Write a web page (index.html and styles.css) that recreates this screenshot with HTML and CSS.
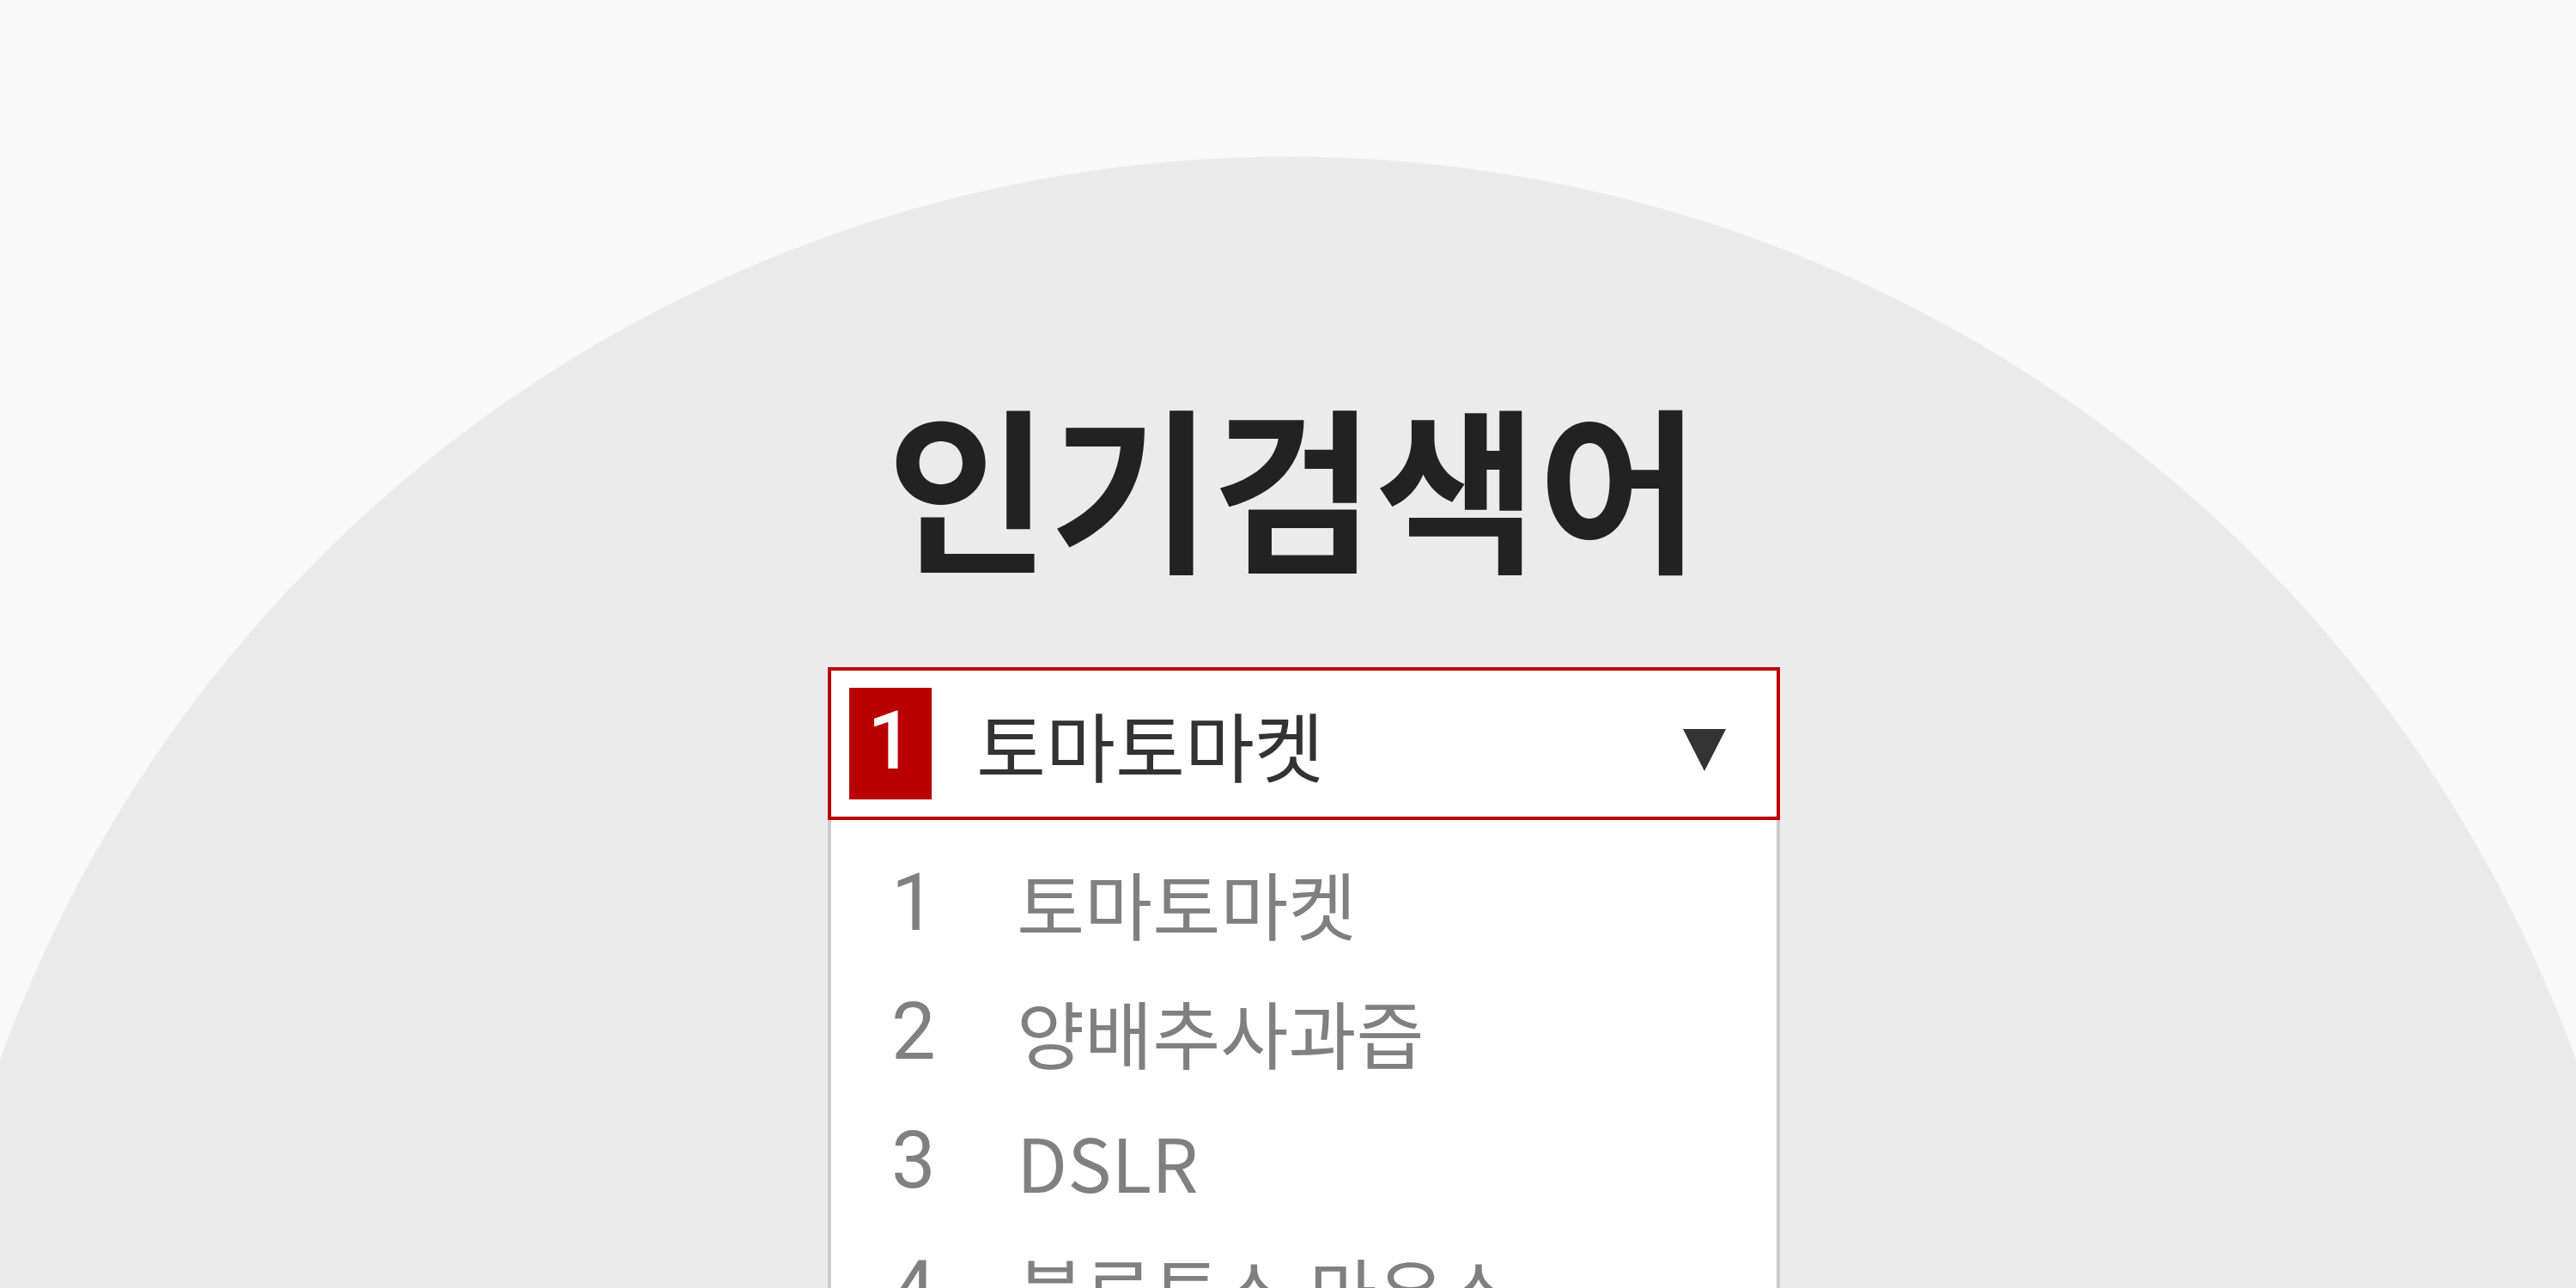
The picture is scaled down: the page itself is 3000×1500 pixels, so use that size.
FILE: index.html
```html
<!DOCTYPE html>
<html lang="ko">
<head>
<meta charset="utf-8">
<title>인기검색어</title>
<link rel="stylesheet" href="styles.css">
</head>
<body>
<main class="stage">
  <h1 class="title">인기검색어</h1>
  <section class="panel">
    <div class="current">
      <span class="badge">1</span>
      <span class="current-text">토마토마켓</span>
      <svg class="arrow" viewBox="0 0 50 49" width="50" height="49" aria-hidden="true"><polygon points="0,0 50,0 25,49" fill="#333"/></svg>
    </div>
    <ol class="list">
      <li class="item"><span class="num">1</span><span class="word">토마토마켓</span></li>
      <li class="item"><span class="num">2</span><span class="word">양배추사과즙</span></li>
      <li class="item"><span class="num">3</span><span class="word">DSLR</span></li>
      <li class="item"><span class="num">4</span><span class="word">블루투스 마우스</span></li>
    </ol>
  </section>
</main>
</body>
</html>
```

FILE: styles.css
```css
html, body {
  margin: 0;
  padding: 0;
}
body {
  width: 3000px;
  height: 1500px;
  overflow: hidden;
  background: radial-gradient(circle 1596px at 1500px 1778px, #ebebeb 0, #ebebeb 1595px, #f9f9f9 1596px);
  font-family: "Noto Sans CJK KR", "Noto Sans", sans-serif;
}
.stage {
  padding-top: 458px;
}
.title {
  margin: 0;
  padding-left: 13px;
  font-size: 206px;
  line-height: 1;
  font-weight: 700;
  color: #222;
  text-align: center;
}
.panel {
  width: 1109px;
  margin: 113px 0 0 964px;
}
.current {
  box-sizing: border-box;
  height: 178px;
  border: 4px solid #bb0000;
  background: #fff;
  display: flex;
  align-items: center;
  padding: 0 59px 0 21px;
}
.badge {
  width: 96px;
  height: 130px;
  background: #b80000;
  color: #fff;
  font-family: Roboto, "Noto Sans", sans-serif;
  font-size: 94px;
  font-weight: 500;
  display: flex;
  align-items: center;
  justify-content: center;
  line-height: 1;
  padding-bottom: 6px;
  box-sizing: border-box;
}
.current-text {
  margin-left: 52px;
  font-size: 88px;
  line-height: 1;
  color: #333;
  flex: 1;
}
.arrow {
  margin-top: 14px;
}
.list {
  list-style: none;
  margin: 0;
  padding: 22px 0 0 0;
  background: #fff;
  border-left: 4px solid #cccccc;
  border-right: 4px solid #cccccc;
}
.item {
  height: 150px;
  display: flex;
  align-items: center;
  color: #808080;
  font-size: 86px;
  line-height: 1;
}
.num {
  width: 146px;
  padding-left: 70px;
  box-sizing: content-box;
  font-family: Roboto, "Noto Sans", sans-serif;
  font-size: 92px;
}
.word {
  white-space: nowrap;
}
```
